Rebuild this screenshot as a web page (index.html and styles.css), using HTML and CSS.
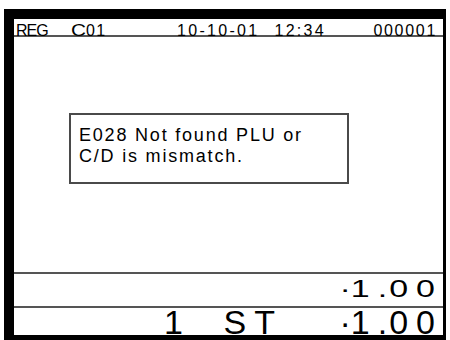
FILE: index.html
```html
<!DOCTYPE html>
<html lang="en">

<head>
  <meta charset="UTF-8">
  <meta name="viewport" content="width=device-width, initial-scale=1.0">
  <title>REG display</title>
  <link rel="stylesheet" href="styles.css">
</head>

<body>
  <div id="display">
    <div id="status">
      <span class="mode">REG</span>
      <span class="clerk"><span class="clerk-c">C</span>01</span>
      <span class="date">10-10-01</span>
      <span class="time">12:34</span>
      <span class="count">000001</span>
    </div>

    <div id="message-area">
      <div class="message">E028 Not found PLU or<br>C/D is mismatch.</div>
    </div>

    <div id="subtotal" class="row">
      <span class="cell"><span class="big"><span class="tight">·</span>1<span class="dot">.</span>00</span></span>
    </div>

    <div id="total" class="row">
      <span class="cell">1</span>
      <span class="cell">ST</span>
      <span class="cell"><span class="tight">·</span>1<span class="dot">.</span>00</span>
    </div>
  </div>
</body>

</html>
```

FILE: styles.css
```css
body {
  margin: 0;
  background-color: #ffffff;
  font-family: "Liberation Sans", Arial, sans-serif;
  color: #000000;
}

#display {
  box-sizing: border-box;
  display: flex;
  flex-direction: column;
  width: 442px;
  height: 331px;
  margin: 9px 0 0 4px;
  border-style: solid;
  border-color: #000000;
  border-width: 10px 3px 5px 10px;
}

/* top status line */
#status {
  display: flex;
  height: 18px;
  padding: 5px 6px 0 2px;
  box-sizing: border-box;
  border-bottom: 2px solid #555555;
  font-size: 16px;
  line-height: 13px;
  white-space: nowrap;
}

#status .mode {
  width: 55px;
  letter-spacing: -1px;
}

#status .clerk {
  width: 106px;
  letter-spacing: 1.4px;
}

.clerk-c {
  display: inline-block;
  width: 15px;
  letter-spacing: 0;
  transform: scaleX(1.3);
  transform-origin: left;
}

#status .date,
#status .time {
  letter-spacing: 2.3px;
}

#status .time {
  margin-left: 15px;
}

#status .count {
  margin-left: auto;
  letter-spacing: 1.7px;
}

/* error window */
#message-area {
  flex: 1;
  padding: 76px 0 0 55px;
  border-bottom: 2px solid #555555;
}

.message {
  box-sizing: border-box;
  width: 280px;
  height: 71px;
  padding: 10px 0 0 8px;
  border: 2px solid #4a4a4a;
  font-size: 18px;
  line-height: 21px;
  letter-spacing: 1.8px;
}

/* amount rows */
.row {
  display: grid;
  grid-template-columns: 177px 92px 1fr;
  font-size: 34px;
  letter-spacing: 8px;
  white-space: nowrap;
}

.row .cell {
  text-align: right;
}

#subtotal {
  grid-template-columns: 1fr;
  height: 32px;
  line-height: 32px;
  border-bottom: 2px solid #555555;
}

.big {
  display: inline-block;
  transform: scaleY(0.7);
  transform-origin: 50% 10px;
}

#total {
  height: 27px;
  padding-top: 1px;
  box-sizing: border-box;
  line-height: 26px;
}

.tight {
  letter-spacing: 0;
}

.dot {
  letter-spacing: 2px;
}
```
